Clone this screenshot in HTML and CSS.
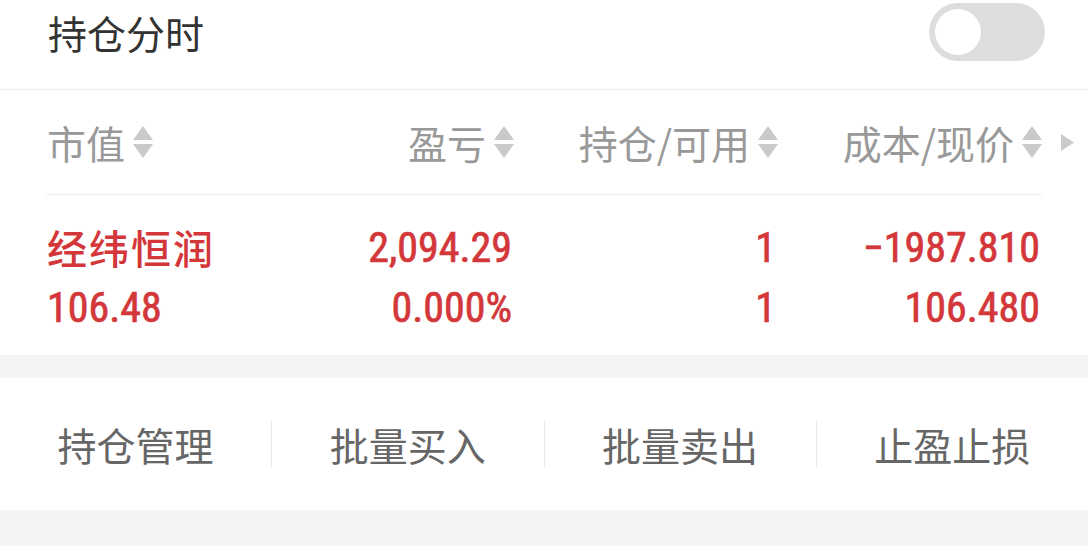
FILE: index.html
```html
<html>
<head>
    <meta charset="utf-8">
    <title>持仓分时</title>
    <link rel="stylesheet" href="styles.css">
</head>
<body>
    <div class="top-bar">
        <span class="title">持仓分时</span>
        <div class="switch"><div class="knob"></div></div>
    </div>

    <div class="panel">
        <div class="head">
            <div class="grid head-grid">
                <div class="cell left">市值<svg class="sort" viewBox="0 0 20 32"><polygon points="10,0 20,14 0,14"/><polygon points="0,18 20,18 10,32"/></svg></div>
                <div class="cell">盈亏<svg class="sort" viewBox="0 0 20 32"><polygon points="10,0 20,14 0,14"/><polygon points="0,18 20,18 10,32"/></svg></div>
                <div class="cell">持仓/可用<svg class="sort" viewBox="0 0 20 32"><polygon points="10,0 20,14 0,14"/><polygon points="0,18 20,18 10,32"/></svg></div>
                <div class="cell">成本/现价<svg class="sort" viewBox="0 0 20 32"><polygon points="10,0 20,14 0,14"/><polygon points="0,18 20,18 10,32"/></svg></div>
            </div>
            <svg class="more" viewBox="0 0 13 17"><polygon points="0,0 13,8.5 0,17"/></svg>
        </div>

        <div class="rows">
            <div class="grid row">
                <div class="cell left name">经纬恒润</div>
                <div class="cell num">2,094.29</div>
                <div class="cell num">1</div>
                <div class="cell num">−1987.810</div>
            </div>
            <div class="grid row">
                <div class="cell left num">106.48</div>
                <div class="cell num">0.000%</div>
                <div class="cell num">1</div>
                <div class="cell num">106.480</div>
            </div>
        </div>
    </div>

    <div class="actions">
        <div class="action">持仓管理</div>
        <div class="action">批量买入</div>
        <div class="action">批量卖出</div>
        <div class="action">止盈止损</div>
    </div>
</body>
</html>
```

FILE: styles.css
```css
body {
    margin: 0;
    background: #f4f4f4;
    font-family: "Noto Sans CJK SC", "Noto Sans", sans-serif;
    overflow: hidden;
}

.top-bar {
    height: 58px;
    padding: 3px 43px 28px 48px;
    display: flex;
    align-items: center;
    justify-content: space-between;
    background: white;
    border-bottom: 1px solid #ededed;
}

.title {
    font-size: 39px;
    color: #333;
}

.switch {
    width: 116px;
    height: 58px;
    box-sizing: border-box;
    padding: 6px;
    border-radius: 29px;
    background: #dddddd;
}

.knob {
    width: 46px;
    height: 46px;
    border-radius: 50%;
    background: white;
}

.panel {
    background: white;
    padding-bottom: 18px;
}

.head {
    display: flex;
    align-items: center;
    padding-left: 46px;
}

.grid {
    display: grid;
    grid-template-columns: 204px 264px 264px 264px;
    width: 996px;
}

.head-grid {
    height: 104px;
    align-items: center;
    border-bottom: 1px solid #ededed;
}

.cell {
    display: flex;
    align-items: center;
    justify-content: flex-end;
    white-space: nowrap;
}

.cell.left {
    justify-content: flex-start;
    padding-left: 1px;
}

.head-grid .cell {
    font-size: 39px;
    color: #999;
}

.sort {
    width: 20px;
    height: 32px;
    margin-left: 8px;
    fill: #cacaca;
}

.more {
    width: 13px;
    height: 17px;
    margin-left: 19px;
    fill: #cacaca;
}

.rows {
    padding: 22px 0 0 46px;
}

.row {
    height: 60px;
    align-items: center;
    color: #d3373a;
}

.name {
    font-size: 40px;
    font-weight: 500;
    letter-spacing: 2px;
}

.num {
    font-family: "Liberation Sans Narrow", "Roboto Condensed", "DejaVu Sans Condensed", Roboto, sans-serif;
    font-size: 42px;
    padding-right: 2px;
    -webkit-text-stroke: 0.7px currentColor;
}

.actions {
    margin-top: 23px;
    height: 132px;
    display: flex;
    align-items: center;
    background: white;
}

.action {
    flex: 1;
    height: 47px;
    display: flex;
    align-items: center;
    justify-content: center;
    font-size: 39px;
    color: #666;
}

.action + .action {
    border-left: 1px solid #eaeaea;
}
```
